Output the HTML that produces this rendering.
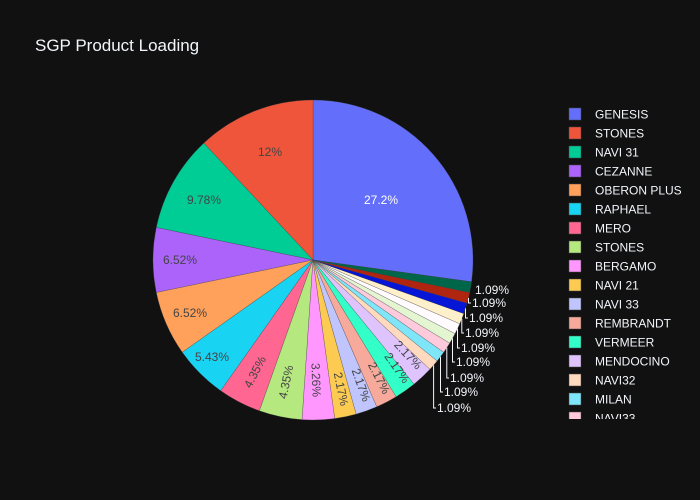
<!DOCTYPE html>
<html><head><meta charset="utf-8"><style>
html,body{margin:0;padding:0;background:#111111;}
svg{display:block;font-family:"Liberation Sans",Arial,sans-serif;}
</style></head><body>
<svg id="s" width="700" height="500" viewBox="0 0 700 500">
<rect width="700" height="500" fill="#111111"/>
<text x="35" y="51" fill="#f2f5fa" font-size="17">SGP Product Loading</text>
<g id="pie"></g>
<g id="lab" font-size="12"></g>
<g id="leg" font-size="12" fill="#f2f5fa"></g>
</svg>
<script>
var cx=313,cy=260,r=160;
var names=["GENESIS","STONES","NAVI 31","CEZANNE","OBERON PLUS","RAPHAEL","MERO","STONES","BERGAMO","NAVI 21","NAVI 33","REMBRANDT","VERMEER","MENDOCINO","NAVI32","MILAN","NAVI33","X18","X19","X20","X21","X22","X23"];
var vals=[25,11,9,6,6,5,4,4,3,2,2,2,2,2,1,1,1,1,1,1,1,1,1];
var cols=["#636efa","#ef553b","#00cc96","#ab63fa","#ffa15a","#19d3f3","#ff6692","#b6e880","#ff97ff","#fecb52",
"#c1c5fd","#f7aa9c","#33ffc8","#dec3fd","#ffdabf","#7ee6f8","#ffcadb","#e4f5d2","#fffbff","#fff0cc",
"#0615d6","#b02510","#006649"];
var NS="http://www.w3.org/2000/svg";
function el(t,a,p,txt){var e=document.createElementNS(NS,t);for(var k in a)e.setAttribute(k,a[k]);if(txt)e.textContent=txt;p.appendChild(e);return e;}
function pt(a,rr){var t=a*Math.PI/180;return [cx+rr*Math.sin(t),cy-rr*Math.cos(t)];}
var pie=document.getElementById('pie');
var total=92;
// GENESIS 0..97.83
var spans=[];spans.push([0,25/total*360]);
var cur=360;
for(var i=1;i<vals.length;i++){var w=vals[i]/total*360;spans.push([cur-w,cur]);cur-=w;}
for(var i=0;i<vals.length;i++){
 var a0=spans[i][0],a1=spans[i][1];var p0=pt(a0,r),p1=pt(a1,r);
 var lg=(a1-a0)>180?1:0;
 el('path',{d:'M'+cx+','+cy+'L'+p0[0]+','+p0[1]+'A'+r+','+r+' 0 '+lg+' 1 '+p1[0]+','+p1[1]+'Z',fill:cols[i],stroke:'#444','stroke-width':'0.3'},pie);
}
var lab=document.getElementById('lab');
function t(x,y,s,c,rot){var a={x:x,y:y+4,'text-anchor':'middle',fill:c};if(rot!==undefined)a.transform='rotate('+rot+' '+x+' '+(y)+')';el('text',a,lab,s);}
t(381,200,"27.2%","#ffffff");
t(270,152,"12%","#444");
t(204,200,"9.78%","#444");
t(180,260,"6.52%","#444");
t(190,313,"6.52%","#444");
t(212,357,"5.43%","#444");
var rot=[[255,372,6,"4.35%"],[286,382,7,"4.35%"],[316,380,8,"3.26%"],[341,389,9,"2.17%"],[361,385,10,"2.17%"],[379,378,11,"2.17%"],[397,368,12,"2.17%"],[408,355,13,"2.17%"]];
rot.forEach(function(q){var s=spans[q[2]];var m=(s[0]+s[1])/2;var ro=m<180?m-90:m-270;t(q[0],q[1],q[3],"#444",ro);});
// outside labels for slices 22..14
var L=[[475,290],[472,303],[469,318],[465,333],[461,348],[456,362],[450,378],[444,392],[437,408]];
for(var j=0;j<9;j++){
 var idx=22-j;var s=spans[idx];var m=(s[0]+s[1])/2;var p=pt(m,r);
 var ly=L[j][1],lx=L[j][0];
 if(j>0)el('path',{d:'M'+p[0].toFixed(1)+','+p[1].toFixed(1)+'V'+ly+'H'+(lx-1),stroke:'#f2f5fa','stroke-width':'1',fill:'none'},lab);
 el('text',{x:lx,y:ly+4,fill:'#f2f5fa'},lab,'1.09%');
}
var leg=document.getElementById('leg');
var clip=el('clipPath',{id:'lc'},document.getElementById('s'));
el('rect',{x:550,y:100,width:150,height:319},clip);
var g=el('g',{'clip-path':'url(#lc)'},leg);
for(var i=0;i<17;i++){
 var y=114+19*i;
 el('rect',{x:569,y:y-6,width:12,height:12,fill:cols[i],stroke:'#444','stroke-width':'0.5'},g);
 el('text',{x:595,y:y+4.5},g,names[i]);
}
</script>
</body></html>
